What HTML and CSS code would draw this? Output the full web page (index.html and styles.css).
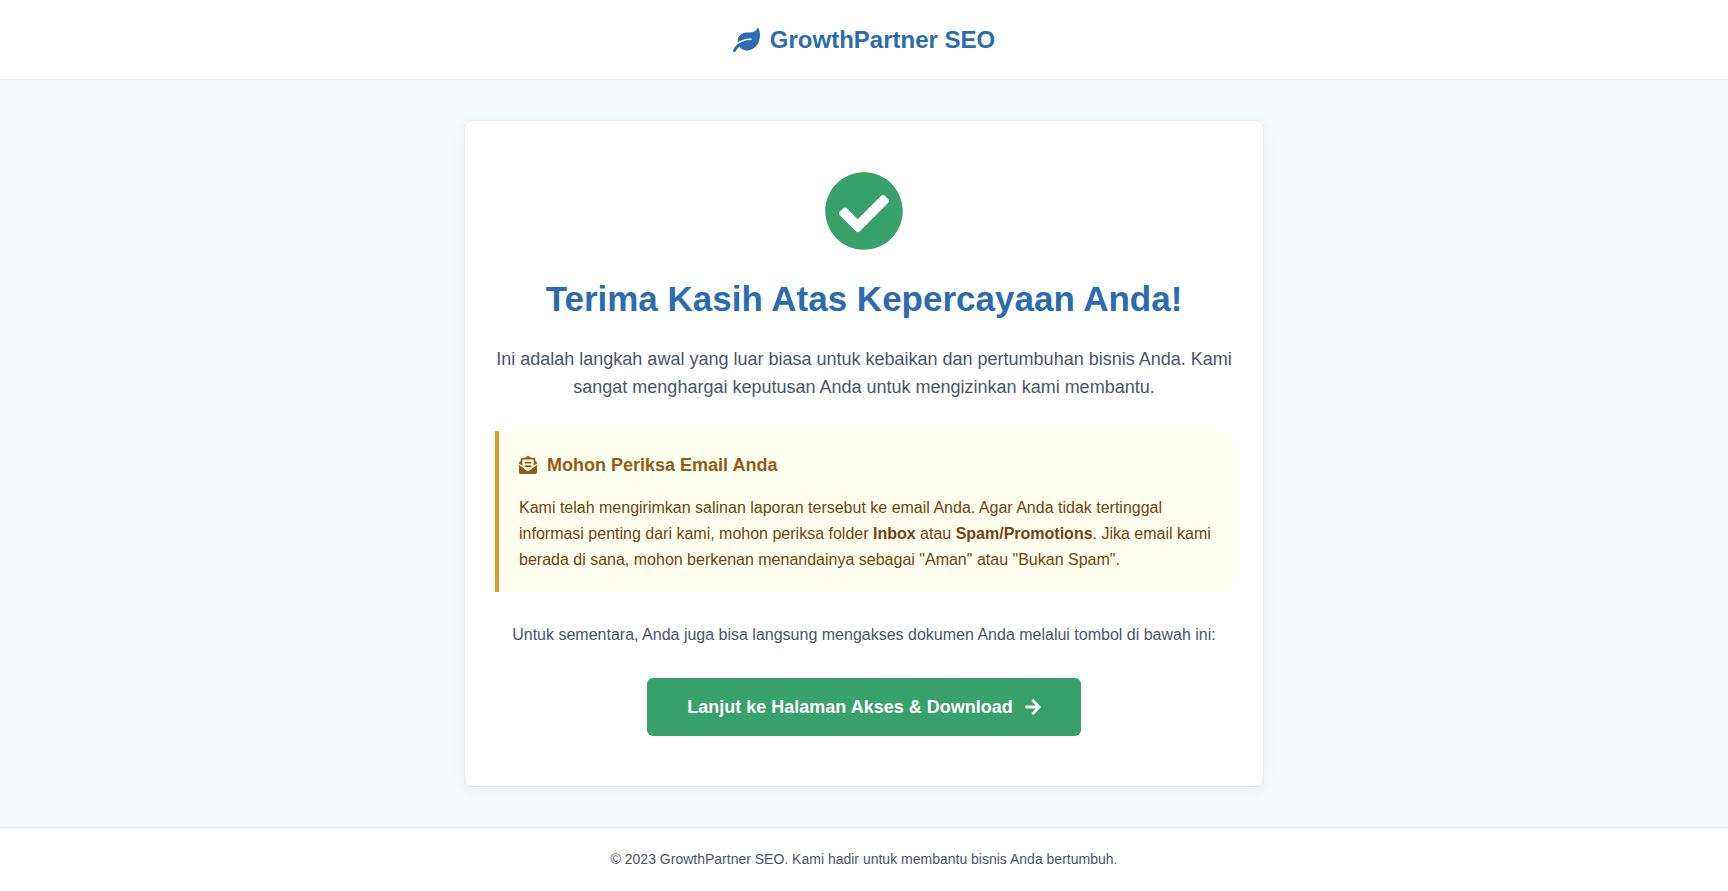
FILE: index.html
```
<!DOCTYPE html>
<html lang="id">
<head>
    <meta charset="UTF-8">
    <meta name="viewport" content="width=device-width, initial-scale=1.0">
    <title>Terima Kasih - GrowthPartner SEO</title>
    <link rel="stylesheet" href="styles.css">
</head>
<body>
    <header class="header">
        <div class="logo">
            <svg class="logo-icon" viewBox="0 0 576 512" aria-hidden="true"><path d="M546.2 9.7c-5.6-12.5-21.6-13-28.3-1.2C486.9 62.4 431.4 96 368 96h-80C182 96 96 182 96 288c0 7 .8 13.7 1.5 20.5C161.3 262.8 253.4 224 384 224c8.8 0 16 7.2 16 16s-7.2 16-16 16C132.6 256 26 410.1 2.4 468c-6.6 16.3 1.2 34.9 17.5 41.6 16.4 6.8 35-1.1 41.8-17.3 1.5-3.6 20.9-47.9 71.9-90.6 32.4 43.9 94 85.8 174.9 77.2C465.5 467.5 576 326.7 576 154.3c0-50.2-10.8-102.2-29.8-144.6z"/></svg>
            <span>GrowthPartner SEO</span>
        </div>
    </header>

    <main class="container">
        <div class="card">
            <svg class="success-icon" viewBox="0 0 512 512" aria-hidden="true"><path d="M504 256c0 136.967-111.033 248-248 248S8 392.967 8 256 119.033 8 256 8s248 111.033 248 248zM227.314 387.314l184-184c6.248-6.248 6.248-16.379 0-22.627l-22.627-22.627c-6.248-6.249-16.379-6.249-22.628 0L216 308.118l-70.059-70.059c-6.248-6.248-16.379-6.248-22.628 0l-22.627 22.627c-6.248 6.248-6.248 16.379 0 22.627l104 104c6.249 6.249 16.379 6.249 22.628.001z"/></svg>
            <h1>Terima Kasih Atas Kepercayaan Anda!</h1>
            <p class="intro">Ini adalah langkah awal yang luar biasa untuk kebaikan dan pertumbuhan bisnis Anda. Kami sangat menghargai keputusan Anda untuk mengizinkan kami membantu.</p>

            <!-- Pemberitahuan email -->
            <div class="notice">
                <h3>
                    <svg class="notice-icon" viewBox="0 0 512 512" aria-hidden="true"><path d="M176 216h160c8.84 0 16-7.16 16-16v-16c0-8.84-7.16-16-16-16H176c-8.84 0-16 7.16-16 16v16c0 8.84 7.16 16 16 16zm-16 80c0 8.84 7.16 16 16 16h160c8.84 0 16-7.16 16-16v-16c0-8.84-7.16-16-16-16H176c-8.84 0-16 7.16-16 16v16zm96 121.13c-16.42 0-32.84-5.06-46.86-15.19L0 250.86V464c0 26.51 21.49 48 48 48h416c26.51 0 48-21.49 48-48V250.86L302.86 401.94c-14.02 10.12-30.44 15.19-46.86 15.19zm237.61-254.18c-8.85-6.94-17.24-13.47-29.61-22.81V96c0-26.51-21.49-48-48-48h-77.55c-3.04-2.2-5.87-4.26-9.04-6.56C312.6 29.17 279.2-.35 256 0c-23.2-.35-56.59 29.17-73.41 41.44-3.17 2.3-6 4.36-9.04 6.56H96c-26.51 0-48 21.49-48 48v44.14c-12.37 9.33-20.76 15.87-29.61 22.81A47.995 47.995 0 0 0 0 200.72v10.65l96 69.35V96h320v184.72l96-69.35v-10.65c0-14.74-6.78-28.67-18.39-37.77z"/></svg>
                    Mohon Periksa Email Anda
                </h3>
                <p>Kami telah mengirimkan salinan laporan tersebut ke email Anda. Agar Anda tidak tertinggal informasi penting dari kami, mohon periksa folder <strong>Inbox</strong> atau <strong>Spam/Promotions</strong>. Jika email kami berada di sana, mohon berkenan menandainya sebagai "Aman" atau "Bukan Spam".</p>
            </div>

            <p class="access">Untuk sementara, Anda juga bisa langsung mengakses dokumen Anda melalui tombol di bawah ini:</p>
            <a href="#" class="cta-button">
                Lanjut ke Halaman Akses &amp; Download
                <svg class="cta-icon" viewBox="0 0 448 512" aria-hidden="true"><path d="M190.5 66.9l22.2-22.2c9.4-9.4 24.6-9.4 33.9 0L441 239c9.4 9.4 9.4 24.6 0 33.9L246.6 467.3c-9.4 9.4-24.6 9.4-33.9 0l-22.2-22.2c-9.5-9.5-9.3-25 .4-34.3L311.4 296H24c-13.3 0-24-10.7-24-24v-32c0-13.3 10.7-24 24-24h287.4L190.9 101.2c-9.8-9.3-10-24.8-.4-34.3z"/></svg>
            </a>
        </div>
    </main>

    <footer class="footer">
        <p>© 2023 GrowthPartner SEO. Kami hadir untuk membantu bisnis Anda bertumbuh.</p>
    </footer>
</body>
</html>
```
FILE: styles.css
```
* {
    box-sizing: border-box;
    margin: 0;
    padding: 0;
}

body {
    display: flex;
    flex-direction: column;
    min-height: 100vh;
    font-family: "Liberation Sans", Helvetica, Arial, sans-serif;
    font-size: 16px;
    line-height: 26px;
    color: #4a5568;
    background-color: #f7fafc;
}

svg {
    fill: currentColor;
    flex-shrink: 0;
}

.header {
    padding: 20px;
    background-color: #fff;
    border-bottom: 1px solid #e2e8f0;
}

.logo {
    display: flex;
    justify-content: center;
    align-items: center;
    gap: 10px;
    font-size: 24px;
    font-weight: bold;
    line-height: 39px;
    color: #2b6cb0;
}

.logo-icon {
    width: 27px;
    height: 24px;
}

.container {
    flex: 1;
    width: 100%;
    max-width: 840px;
    margin: 0 auto;
    padding: 40px 20px;
}

.card {
    padding: 50px 30px;
    text-align: center;
    background-color: #fff;
    border: 1px solid #e2e8f0;
    border-radius: 8px;
    box-shadow: 0 4px 15px rgba(0, 0, 0, 0.05);
}

.success-icon {
    display: block;
    width: 80px;
    height: 80px;
    margin: 0 auto 20px;
    color: #38a169;
}

h1 {
    margin-bottom: 18px;
    font-size: 35px;
    line-height: 56px;
    color: #2b6cb0;
}

.intro {
    margin-bottom: 30px;
    font-size: 18px;
    line-height: 28px;
}

/* Kotak kuning */
.notice {
    margin-bottom: 30px;
    padding: 20px 20px 19px;
    text-align: left;
    color: #744210;
    background-color: #fffff0;
    border-left: 4px solid #d69e2e;
    border-radius: 0 4px 4px 0;
}

.notice h3 {
    display: flex;
    align-items: center;
    gap: 10px;
    margin-bottom: 16px;
    font-size: 18px;
    line-height: 28px;
    color: #975a16;
}

.notice-icon {
    width: 18px;
    height: 18px;
}

.access {
    margin-bottom: 30px;
}

.cta-button {
    display: inline-flex;
    align-items: center;
    gap: 12px;
    padding: 15px 40px;
    font-size: 18px;
    font-weight: bold;
    line-height: 28px;
    color: #fff;
    text-decoration: none;
    vertical-align: top;
    background-color: #38a169;
    border-radius: 6px;
}

.cta-button:hover {
    background-color: #2f855a;
}

.cta-icon {
    width: 16px;
    height: 18px;
}

.footer {
    padding: 20px;
    font-size: 14px;
    line-height: 23px;
    text-align: center;
    background-color: #fff;
    border-top: 1px solid #e2e8f0;
}
```
